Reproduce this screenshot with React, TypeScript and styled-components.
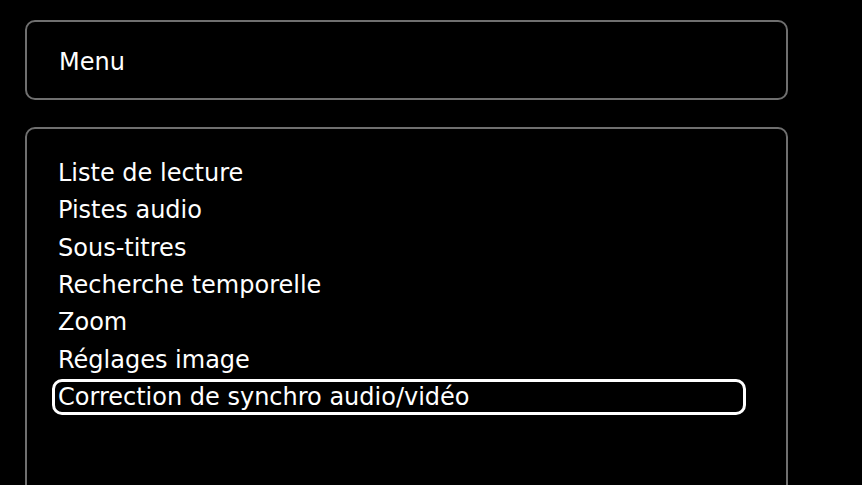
import styled, { createGlobalStyle } from "styled-components";

const GlobalStyle = createGlobalStyle`
  html, body {
    margin: 0;
    padding: 0;
    background: #000;
    overflow: hidden;
  }
  body {
    font-family: "DejaVu Sans", Verdana, sans-serif;
    color: #fff;
  }
`;

const Screen = styled.div`
  width: 763px;
  padding: 20px 0 0 25px;
  display: flex;
  flex-direction: column;
  gap: 27px;
`;

const Panel = styled.div`
  border: 2px solid #6f6f6f;
  border-radius: 10px;
  background: #000;
`;

const TitlePanel = styled(Panel)`
  height: 76px;
  box-sizing: border-box;
  height: 80px;
  display: flex;
  align-items: center;
  padding: 3px 32px 0;
  font-size: 24px;
`;

const ListPanel = styled(Panel)`
  height: 420px;
  padding: 26px 40px 0 25px;
`;

const List = styled.ul`
  list-style: none;
  margin: 0;
  padding: 0;
  display: flex;
  flex-direction: column;
  gap: 1.33px;
`;

const Item = styled.li<{ selected?: boolean }>`
  font-size: 24px;
  line-height: 30px;
  padding: 0 3px;
  border: 3px solid ${(p) => (p.selected ? "#fff" : "transparent")};
  border-radius: 10px;
  white-space: nowrap;
`;

const items = [
  "Liste de lecture",
  "Pistes audio",
  "Sous-titres",
  "Recherche temporelle",
  "Zoom",
  "Réglages image",
  "Correction de synchro audio/vidéo",
];

export default function App() {
  const selected = 6;
  return (
    <>
      <GlobalStyle />
      <Screen>
        <TitlePanel>Menu</TitlePanel>
        <ListPanel>
          <List>
            {items.map((label, i) => (
              <Item key={label} selected={i === selected}>
                {label}
              </Item>
            ))}
          </List>
        </ListPanel>
      </Screen>
    </>
  );
}
